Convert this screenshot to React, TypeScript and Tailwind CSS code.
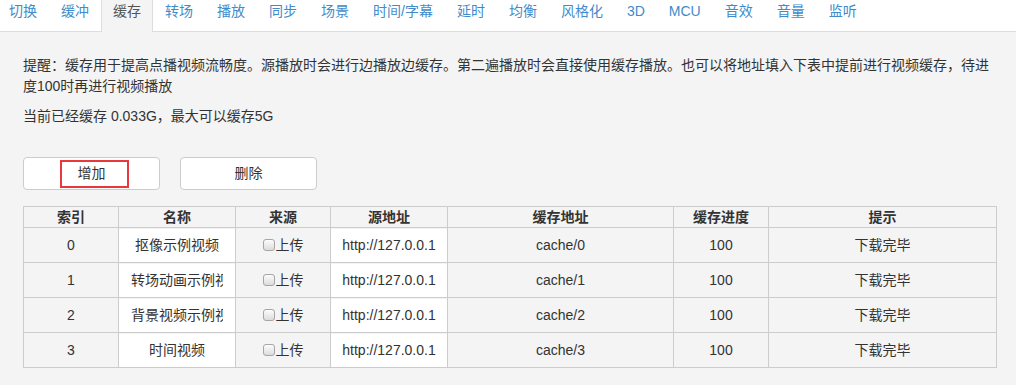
import React from "react";

const tabs = ["切换", "缓冲", "缓存", "转场", "播放", "同步", "场景", "时间/字幕", "延时", "均衡", "风格化", "3D", "MCU", "音效", "音量", "监听"];

const rows = [
  { idx: "0", name: "抠像示例视频", url: "http://127.0.0.1", cache: "cache/0" },
  { idx: "1", name: "转场动画示例视频", url: "http://127.0.0.1", cache: "cache/1" },
  { idx: "2", name: "背景视频示例视频", url: "http://127.0.0.1", cache: "cache/2" },
  { idx: "3", name: "时间视频", url: "http://127.0.0.1", cache: "cache/3" },
];

const headers = ["索引", "名称", "来源", "源地址", "缓存地址", "缓存进度", "提示"];

function Checkbox() {
  return (
    <span className="inline-block w-[12px] h-[12px] mr-[1px] align-[-1px] rounded-[3px] border border-[#a6a6a6] bg-gradient-to-b from-[#fcfcfc] to-[#dcdcdc]" />
  );
}

export default function App() {
  return (
    <div className="w-[1016px] h-[385px] bg-[#f4f4f4] text-[#333] text-[14px] font-['Liberation_Sans','Noto_Sans_CJK_SC',sans-serif] [text-spacing-trim:space-all] overflow-hidden">
      <div className="flex items-start h-[32px] bg-white border-b border-[#ddd]">
        {tabs.map((t, i) => {
          const active = t === "缓存";
          return (
            <div
              key={t}
              className={
                (i === 0 ? "ml-[-3px] " : "") +
                (active
                  ? "h-[32px] bg-[#f4f4f4] border-x border-[#ddd] text-[#555] "
                  : "h-[31px] border-x border-transparent text-[#428bca] ") +
                "px-[11px] pt-[1px] leading-[20px] whitespace-nowrap"
              }
            >
              {t}
            </div>
          );
        })}
      </div>

      <div className="pl-[23px] pr-[20px] pt-[23px]">
        <p className="leading-[21px]">
          提醒：缓存用于提高点播视频流畅度。源播放时会进行边播放边缓存。第二遍播放时会直接使用缓存播放。也可以将地址填入下表中提前进行视频缓存，待进
          <br />
          度100时再进行视频播放
        </p>
        <p className="leading-[21px] mt-[9px]">当前已经缓存 0.033G，最大可以缓存5G</p>

        <div className="flex gap-[20px] mt-[30px]">
          <button className="relative w-[137px] h-[33px] bg-white border border-[#ccc] rounded-[4px] text-[#333] leading-[31px]">
            增加
            <span className="absolute left-[36px] top-[2px] w-[69px] h-[28px] border-2 border-[#e8383d] pointer-events-none" />
          </button>
          <button className="w-[137px] h-[33px] bg-white border border-[#ccc] rounded-[4px] text-[#333] leading-[31px]">
            删除
          </button>
        </div>

        <table className="mt-[16px] w-[973px] table-fixed border-collapse">
          <colgroup>
            <col className="w-[95px]" />
            <col className="w-[117px]" />
            <col className="w-[95px]" />
            <col className="w-[117px]" />
            <col className="w-[226px]" />
            <col className="w-[95px]" />
            <col className="w-[228px]" />
          </colgroup>
          <thead>
            <tr>
              {headers.map((h) => (
                <th key={h} className="h-[21px] p-0 leading-[20px] text-center font-bold border border-[#ccc]">
                  {h}
                </th>
              ))}
            </tr>
          </thead>
          <tbody>
            {rows.map((r) => (
              <tr key={r.idx}>
                <td className="h-[35px] p-0 text-center border border-[#ccc]">{r.idx}</td>
                <td className="h-[35px] p-0 border border-[#ccc]">
                  <div className="h-[33px] mt-[1px] bg-white px-[12px]">
                    <div className="leading-[33px] text-center whitespace-nowrap overflow-hidden">{r.name}</div>
                  </div>
                </td>
                <td className="h-[35px] p-0 text-center border border-[#ccc] whitespace-nowrap">
                  <Checkbox />
                  上传
                </td>
                <td className="h-[35px] p-0 border border-[#ccc]">
                  <div className="h-[33px] mt-[1px] bg-white px-[10px]">
                    <div className="leading-[33px] text-center whitespace-nowrap overflow-hidden">{r.url}</div>
                  </div>
                </td>
                <td className="h-[35px] p-0 text-center border border-[#ccc]">{r.cache}</td>
                <td className="h-[35px] p-0 text-center border border-[#ccc]">100</td>
                <td className="h-[35px] p-0 text-center border border-[#ccc]">下载完毕</td>
              </tr>
            ))}
          </tbody>
        </table>
      </div>
    </div>
  );
}
